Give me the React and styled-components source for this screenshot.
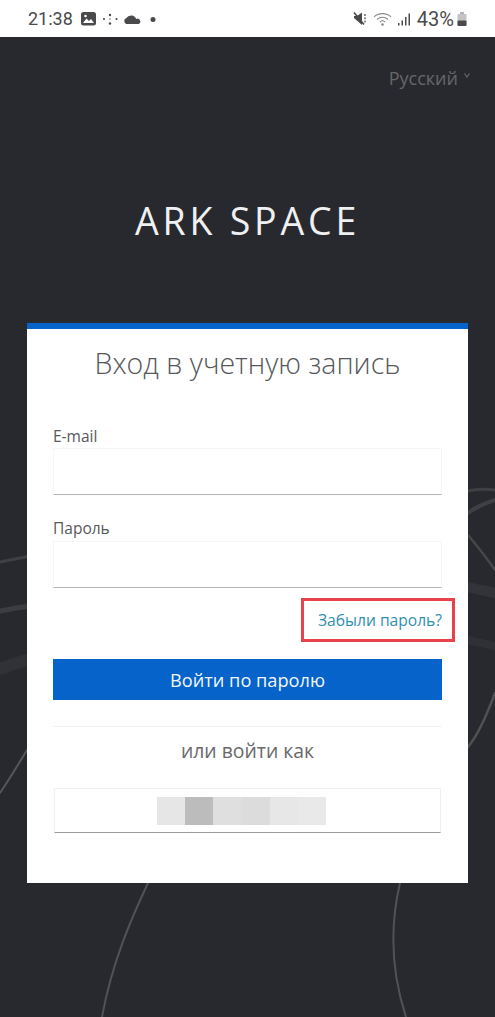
import React from 'react'
import styled, { createGlobalStyle } from 'styled-components'

const GlobalStyle = createGlobalStyle`
    html, body { margin: 0; padding: 0; background: #28292e; }
    * { box-sizing: border-box; }
    body { font-family: "Open Sans", "Noto Sans", sans-serif; }
`
const Page = styled.div`
    width: 495px;
    height: 1017px;
    display: flex;
    flex-direction: column;
    overflow: hidden;
`
const StatusBar = styled.div`
    height: 37px;
    flex: none;
    background: #fff;
    display: flex;
    align-items: center;
    justify-content: space-between;
    padding: 0 28px;
    color: #4a4a4c;
    font-family: Roboto, "Noto Sans", sans-serif;
    font-size: 18px;
`
const StatusGroup = styled.div`
    display: flex;
    align-items: center;
`
const Clock = styled.span`
    margin-right: 7px;
`
const Percent = styled.span`
    margin: 0 3px 0 6px;
    font-size: 20px;
`
const Screen = styled.div`
    position: relative;
    flex: 1;
    background: #28292e;
    display: flex;
    flex-direction: column;
    align-items: center;
`
const Lines = styled.svg`
    position: absolute;
    top: 0;
    left: 0;
`
const LangRow = styled.div`
    position: relative;
    align-self: stretch;
    display: flex;
    justify-content: flex-end;
    align-items: center;
    gap: 6px;
    padding: 29px 25px 0 0;
    height: 53px;
    color: #65666a;
    font-size: 18px;
    line-height: 24px;
`
const Caret = styled.svg`
    margin-bottom: 6px;
`
const Logo = styled.h1`
    position: relative;
    margin: 109px 0 0;
    color: #eef0f2;
    font-size: 37.5px;
    line-height: 44px;
    font-weight: 400;
    letter-spacing: 3.8px;
`
const Card = styled.div`
    position: relative;
    margin-top: 80px;
    width: 441px;
    height: 560px;
    background: #fff;
    border-top: 6px solid #0563c9;
    padding: 0 26px;
    display: flex;
    flex-direction: column;
`
const Heading = styled.h2`
    margin: 15px 0 0;
    text-align: center;
    color: #56585b;
    font-size: 28.5px;
    line-height: 38px;
    font-weight: 300;
`
const Label = styled.label`
    display: block;
    margin-top: ${p => p.$top}px;
    color: #57585a;
    font-size: 15.5px;
    line-height: 20px;
`
const Input = styled.input`
    display: block;
    width: 100%;
    height: ${p => p.$height}px;
    margin-top: ${p => p.$gap}px;
    border: 1px solid #f6f6f6;
    border-bottom: 1px solid #b4b4b4;
    outline: none;
    background: #fff;
`
const LinkRow = styled.div`
    display: flex;
    justify-content: flex-end;
    margin-top: 21px;
`
const ForgotLink = styled.a`
    position: relative;
    color: #2f8fb0;
    font-size: 15.6px;
    line-height: 22px;
    &::after {
        content: "";
        position: absolute;
        top: -11px;
        bottom: -11px;
        left: -17px;
        right: -13px;
        border: 3px solid #e8434c;
    }
`
const SubmitButton = styled.button`
    display: block;
    width: 100%;
    height: 41px;
    margin-top: 28px;
    border: none;
    background: #0563c9;
    color: #f2f6fb;
    font-family: inherit;
    font-size: 18.2px;
`
const Divider = styled.div`
    height: 1px;
    margin-top: 26px;
    background: #f3f3f3;
`
const OrText = styled.div`
    margin-top: 11px;
    text-align: center;
    color: #68696b;
    font-size: 19.4px;
    line-height: 26px;
`
const SsoButton = styled.div`
    margin: 24px 1px 0;
    height: 45px;
    border: 1px solid #f0f0f0;
    border-bottom: 1px solid #9c9c9c;
    display: flex;
    justify-content: center;
    align-items: center;
`
const Blur = styled.div`
    display: flex;
    width: 169px;
    height: 28px;
    margin-right: 12px;
`
const BlurCell = styled.div`
    flex: 1;
    background: ${p => p.$color};
`

const blurCells = ['#e6e6e6', '#bcbcbc', '#dfdfdf', '#dcdcdc', '#e7e7e7', '#e9e9e9']

const StatusLeftIcons = () => (
    <svg width="78" height="16" viewBox="0 0 78 16" fill="#4a4a4c">
        <rect x="1" y="1" width="15" height="13.5" rx="2.5" />
        <path d="M3 12 L6.5 7.5 L9 10 L11 8 L14 12 Z" fill="#fff" />
        <circle cx="5.5" cy="5" r="1.3" fill="#fff" />
        <circle cx="24" cy="8" r="1.1" />
        <circle cx="30" cy="4" r="1.2" />
        <circle cx="30" cy="8" r="0.7" />
        <circle cx="30" cy="12.5" r="1.2" />
        <circle cx="36.5" cy="8" r="1.1" />
        <path d="M46 13 a3.3 3.3 0 0 1 0.4 -6 a5.5 5.5 0 0 1 9.8 0.9 a2.8 2.8 0 0 1 2.5 5.1 Z" />
        <circle cx="73" cy="8.5" r="2.5" />
    </svg>
)

const StatusRightIcons = () => (
    <svg width="58" height="18" viewBox="0 0 58 18" fill="#4a4a4c">
        <path d="M1 6 H4 L9 2.5 V15 L1 8 Z" />
        <path d="M1 2.5 L11 14.5" stroke="#4a4a4c" strokeWidth="1.6" />
        <path d="M12 4 V13" stroke="#4a4a4c" strokeWidth="1.2" strokeDasharray="2 1.2" />
        <path d="M21 7 C25 2.5 34 2.5 38 7 M24 9.5 C27 6.5 32 6.5 35 9.5 M27 12 C28.5 10.5 30.5 10.5 32 12" fill="none" stroke="#8a8b8d" strokeWidth="1.1" />
        <circle cx="29.5" cy="14.5" r="1.3" fill="#8a8b8d" />
        <rect x="45" y="13" width="1.5" height="2.5" />
        <rect x="48.5" y="10.5" width="1.5" height="5" />
        <rect x="52" y="7" width="1.5" height="8.5" />
        <rect x="55.5" y="3.5" width="1.5" height="12" />
    </svg>
)

const Battery = () => (
    <svg width="10" height="16" viewBox="0 0 10 16">
        <rect x="3" y="1" width="4" height="2" fill="#b5b5b7" />
        <rect x="0.5" y="3" width="9" height="12" rx="1" fill="#c4c4c6" />
        <rect x="0.5" y="9.5" width="9" height="5.5" rx="1" fill="#4a4a4c" />
    </svg>
)

// coordinates are relative to the dark area, which starts 37px below the top
const Backdrop = () => (
    <Lines width="495" height="980" viewBox="0 0 495 980" fill="none">
        <g strokeLinecap="round">
            <path d="M0 525 C10 523 20 521 30 519" strokeWidth="3" stroke="#3f4045" />
            <path d="M0 574 C10 572 20 570 30 569" strokeWidth="5" stroke="#3c3d42" />
            <path d="M0 632 C10 628 20 625 30 622" strokeWidth="12" stroke="#313237" />
            <path d="M0 756 C10 741 18 728 27 713" strokeWidth="2" stroke="#55565a" />
            <path d="M468 454 C476 452 486 452 495 453" strokeWidth="3" stroke="#3f4045" />
            <path d="M468 476 C476 470 486 466 495 463" strokeWidth="4" stroke="#3f4045" />
            <path d="M468 498 C478 510 488 523 495 533" strokeWidth="2.5" stroke="#46474b" />
            <path d="M468 550 C476 552 486 554 495 556" strokeWidth="10" stroke="#333439" />
            <path d="M468 603 C476 605 486 607 495 609" strokeWidth="8" stroke="#303136" />
            <path d="M468 710 C478 698 488 675 495 656" strokeWidth="2.5" stroke="#505155" />
            <path d="M148 846 C132 880 112 925 102 980" strokeWidth="2" stroke="#515256" />
            <path d="M400 846 C392 880 388 925 406 980" strokeWidth="2" stroke="#515256" />
        </g>
    </Lines>
)

const App = () => {
    return (
        <Page>
            <GlobalStyle />
            <StatusBar>
                <StatusGroup>
                    <Clock>21:38</Clock>
                    <StatusLeftIcons />
                </StatusGroup>
                <StatusGroup>
                    <StatusRightIcons />
                    <Percent>43%</Percent>
                    <Battery />
                </StatusGroup>
            </StatusBar>
            <Screen>
                <Backdrop />
                <LangRow>
                    Русский
                    <Caret width="6" height="5" viewBox="0 0 6 5" fill="none">
                        <path d="M0.5 0.5 L3 4 L5.5 0.5" stroke="#65666a" strokeWidth="1.2" />
                    </Caret>
                </LangRow>
                <Logo>ARK SPACE</Logo>
                <Card>
                    <Heading>Вход в учетную запись</Heading>
                    <Label $top={44}>E-mail</Label>
                    <Input $height={47} $gap={2} type="text" />
                    <Label $top={23}>Пароль</Label>
                    <Input $height={47} $gap={3} type="password" />
                    <LinkRow>
                        <ForgotLink>Забыли пароль?</ForgotLink>
                    </LinkRow>
                    <SubmitButton>Войти по паролю</SubmitButton>
                    <Divider />
                    <OrText>или войти как</OrText>
                    <SsoButton>
                        <Blur>
                            {blurCells.map((color, i) => <BlurCell key={i} $color={color} />)}
                        </Blur>
                    </SsoButton>
                </Card>
            </Screen>
        </Page>
    )
}

export default App
